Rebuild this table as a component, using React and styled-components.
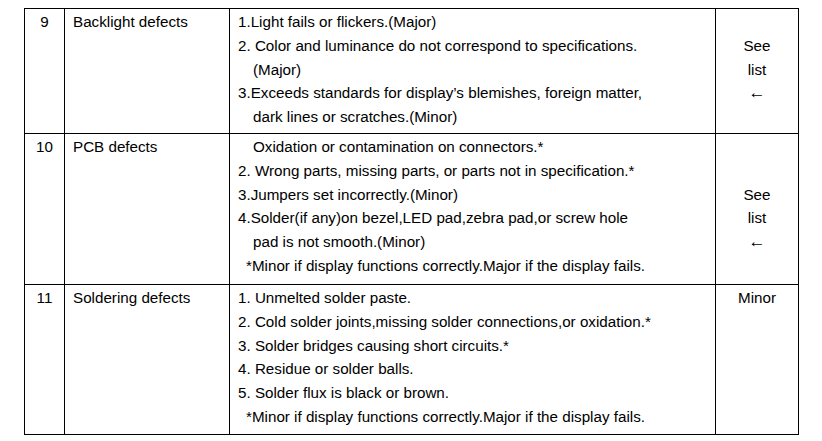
import styled, { createGlobalStyle } from "styled-components";

const GlobalStyle = createGlobalStyle`
  html, body {
    margin: 0;
    padding: 0;
    background: #ffffff;
  }
  body {
    font-family: "Liberation Sans", Arial, sans-serif;
    color: #000;
  }
`;

const Page = styled.div`
  padding: 8px 0 0 24px;
`;

const Table = styled.table`
  border-collapse: collapse;
  table-layout: fixed;
  width: 775px;
  font-size: 15.2px;
  line-height: 23.8px;
`;

const Cell = styled.td`
  border: 1.3px solid #000;
  vertical-align: top;
  padding: 1px 0 0 ${(p) => p.$padLeft || 0}px;
  height: ${(p) => p.$h}px;
  text-align: ${(p) => (p.$center ? "center" : "left")};
  box-sizing: border-box;
`;

const Line = styled.div`
  padding-left: ${(p) => p.$indent || 0}px;
  white-space: nowrap;
`;

const Verdict = styled.div`
  padding-top: ${(p) => p.$offset * 23.8}px;
`;

const Arrow = styled.div`
  font-size: 17px;
`;

const rows = [
  {
    no: "9",
    item: "Backlight defects",
    h: 125,
    offset: 1,
    verdict: "list",
    lines: [
      ["1.Light fails or flickers.(Major)", 0],
      ["2. Color and luminance do not correspond to specifications.", 0],
      ["(Major)", 15],
      ["3.Exceeds standards for display\u2019s blemishes, foreign matter,", 0],
      ["dark lines or scratches.(Minor)", 15],
    ],
  },
  {
    no: "10",
    item: "PCB defects",
    h: 151,
    offset: 2,
    verdict: "list",
    lines: [
      ["Oxidation or contamination on connectors.*", 15],
      ["2. Wrong parts, missing parts, or parts not in specification.*", 0],
      ["3.Jumpers set incorrectly.(Minor)", 0],
      ["4.Solder(if any)on bezel,LED pad,zebra pad,or screw hole", 0],
      ["pad is not smooth.(Minor)", 15],
      ["*Minor if display functions correctly.Major if the display fails.", 8],
    ],
  },
  {
    no: "11",
    item: "Soldering defects",
    h: 150,
    offset: 0,
    verdict: "minor",
    lines: [
      ["1. Unmelted solder paste.", 0],
      ["2. Cold solder joints,missing solder connections,or oxidation.*", 0],
      ["3. Solder bridges causing short circuits.*", 0],
      ["4. Residue or solder balls.", 0],
      ["5. Solder flux is black or brown.", 0],
      ["*Minor if display functions correctly.Major if the display fails.", 8],
    ],
  },
];

export default function App() {
  return (
    <Page>
      <GlobalStyle />
      <Table>
        <colgroup>
          <col style={{ width: 40 }} />
          <col style={{ width: 165 }} />
          <col style={{ width: 486 }} />
          <col style={{ width: 83 }} />
        </colgroup>
        <tbody>
          {rows.map((r) => (
            <tr key={r.no}>
              <Cell $h={r.h} $center>
                {r.no}
              </Cell>
              <Cell $h={r.h} $padLeft={8}>
                {r.item}
              </Cell>
              <Cell $h={r.h} $padLeft={8}>
                {r.lines.map(([t, indent], i) => (
                  <Line key={i} $indent={indent}>
                    {t}
                  </Line>
                ))}
              </Cell>
              <Cell $h={r.h} $center>
                <Verdict $offset={r.offset}>
                  {r.verdict === "list" ? (
                    <>
                      <div>See</div>
                      <div>list</div>
                      <Arrow>←</Arrow>
                    </>
                  ) : (
                    <div>Minor</div>
                  )}
                </Verdict>
              </Cell>
            </tr>
          ))}
        </tbody>
      </Table>
    </Page>
  );
}
